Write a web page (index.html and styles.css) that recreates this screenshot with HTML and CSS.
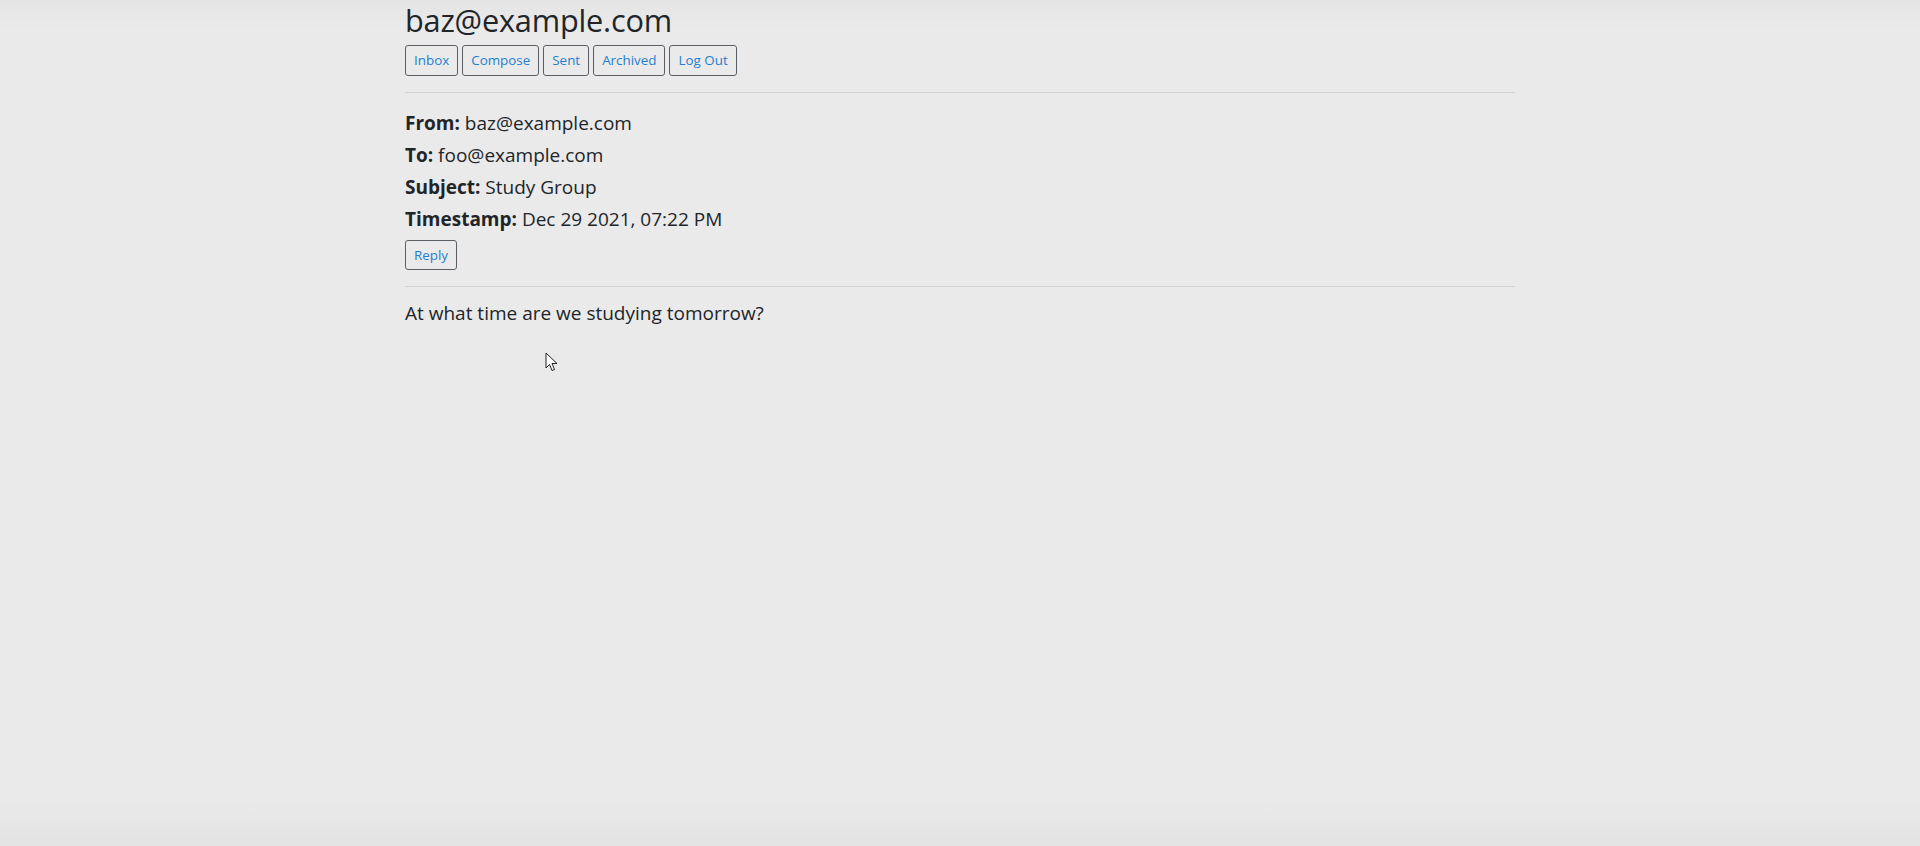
FILE: index.html
```html
<!DOCTYPE html>
<html lang="en">
<head>
<meta charset="utf-8">
<title>Mail</title>
<link rel="stylesheet" href="styles.css">
</head>
<body>
<div class="container">
  <h2 class="title">baz@example.com</h2>
  <nav class="nav">
    <button class="btn">Inbox</button>
    <button class="btn">Compose</button>
    <button class="btn">Sent</button>
    <button class="btn">Archived</button>
    <button class="btn">Log Out</button>
  </nav>
  <hr class="rule">
  <div class="fields">
    <div class="field"><b>From:</b> baz@example.com</div>
    <div class="field"><b>To:</b> foo@example.com</div>
    <div class="field"><b>Subject:</b> Study Group</div>
    <div class="field"><b>Timestamp:</b> Dec 29 2021, 07:22 PM</div>
  </div>
  <button class="btn reply">Reply</button>
  <hr class="rule">
  <p class="body-text">At what time are we studying tomorrow?</p>
</div>
<svg class="cursor" width="13" height="20" viewBox="0 0 13 20"><path d="M1 1 L1 16 L4.5 12.5 L7 18.5 L9.5 17.5 L7 11.5 L12 11.5 Z" fill="#fff" stroke="#222" stroke-width="1" stroke-linejoin="round"/></svg>
</body>
</html>
```

FILE: styles.css
```css
html, body {
  margin: 0;
  padding: 0;
}
body {
  min-height: 846px;
  background: linear-gradient(to bottom, #e5e5e5 0px, #eaeaea 30px, #eaeaea 800px, #e3e3e3 846px);
  font-family: "Open Sans", "Noto Sans", sans-serif;
  color: #212529;
  position: relative;
}
.container {
  width: 1110px;
  margin: 0 auto;
}
.title {
  margin: 0;
  font-weight: 400;
  font-size: 30.7px;
  line-height: 38px;
  padding-top: 1px;
  letter-spacing: -0.2px;
}
.nav {
  margin-top: 6px;
  display: flex;
  gap: 4px;
}
.btn {
  font-family: "Open Sans", "Noto Sans", sans-serif;
  font-size: 13.4px;
  line-height: 21px;
  padding: 4px 8px;
  background: transparent;
  color: #1f7fd0;
  border: 1px solid #5a5f66;
  border-radius: 3px;
  cursor: pointer;
}
.rule {
  margin: 16px 0 0;
  border: 0;
  border-top: 1px solid #d2d2d2;
  height: 0;
}
.fields {
  padding-top: 14px;
}
.field {
  font-size: 19px;
  line-height: 32px;
}
.field b {
  font-weight: 700;
}
.reply {
  margin-top: 5px;
  line-height: 20px;
}
.body-text {
  margin: 12px 0 0;
  font-size: 19px;
  line-height: 28px;
}
.cursor {
  position: absolute;
  left: 545px;
  top: 352px;
}
```
